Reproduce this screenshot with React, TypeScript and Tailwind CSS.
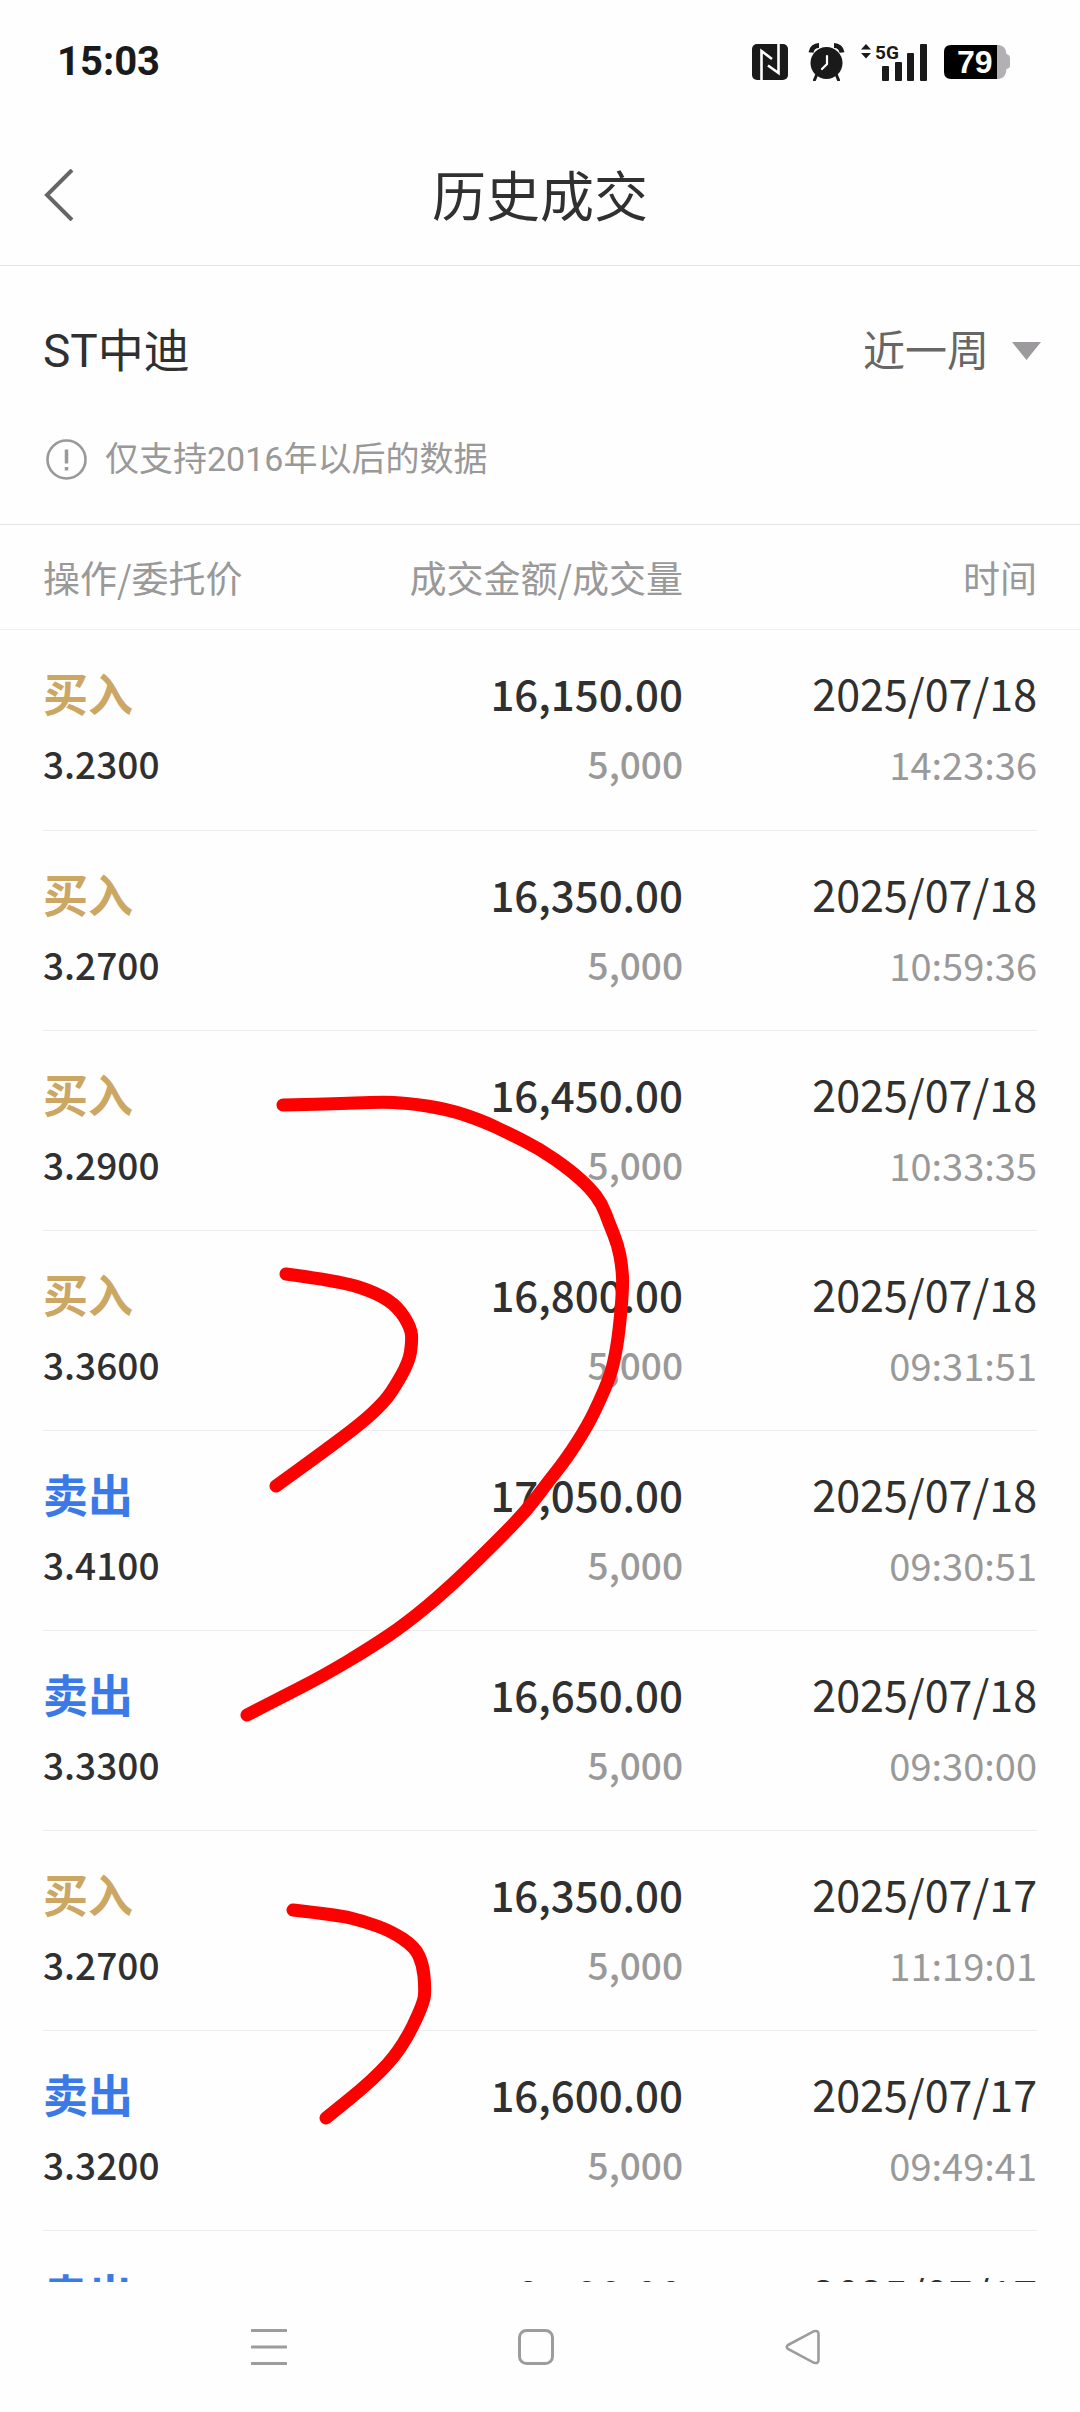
import { useState } from "react"

type Trade = {
   side: 'buy' | 'sell'
   price: string
   amount: string
   volume: string
   date: string
   time: string
}

const trades: Trade[] = [
   { side: 'buy', price: '3.2300', amount: '16,150.00', volume: '5,000', date: '2025/07/18', time: '14:23:36' },
   { side: 'buy', price: '3.2700', amount: '16,350.00', volume: '5,000', date: '2025/07/18', time: '10:59:36' },
   { side: 'buy', price: '3.2900', amount: '16,450.00', volume: '5,000', date: '2025/07/18', time: '10:33:35' },
   { side: 'buy', price: '3.3600', amount: '16,800.00', volume: '5,000', date: '2025/07/18', time: '09:31:51' },
   { side: 'sell', price: '3.4100', amount: '17,050.00', volume: '5,000', date: '2025/07/18', time: '09:30:51' },
   { side: 'sell', price: '3.3300', amount: '16,650.00', volume: '5,000', date: '2025/07/18', time: '09:30:00' },
   { side: 'buy', price: '3.2700', amount: '16,350.00', volume: '5,000', date: '2025/07/17', time: '11:19:01' },
   { side: 'sell', price: '3.3200', amount: '16,600.00', volume: '5,000', date: '2025/07/17', time: '09:49:41' },
   { side: 'sell', price: '3.3400', amount: '16,700.00', volume: '5,000', date: '2025/07/17', time: '09:36:12' },
]

// pen strokes linking a buy with its matching sell
const strokes: number[][][] = [
   [[283, 1105], [330, 1104], [380, 1102], [407, 1103], [447, 1109], [483, 1121], [510, 1134], [540, 1149], [570, 1170],
    [590, 1188], [602, 1204], [609, 1223], [618, 1245], [622, 1267], [623, 1287], [619, 1333], [614, 1362], [609, 1379],
    [600, 1400], [588, 1425], [567, 1458], [548, 1482], [527, 1510], [500, 1538], [450, 1587], [407, 1623], [370, 1648],
    [323, 1676], [280, 1698], [247, 1715]],
   [[286, 1274], [340, 1281], [377, 1293], [398, 1307], [411, 1328], [412, 1342], [409, 1362], [393, 1390], [383, 1403],
    [363, 1422], [323, 1452], [276, 1486]],
   [[293, 1910], [338, 1915], [363, 1921], [391, 1931], [415, 1947], [423, 1965], [425, 1987], [424, 2003], [402, 2048],
    [373, 2080], [326, 2118]],
]

const toPath = (points: number[][]) => {
   let d = `M${points[0][0]} ${points[0][1]}`
   for (let i = 1; i < points.length - 1; i++) {
      const [x, y] = points[i]
      const [nx, ny] = points[i + 1]
      d += ` Q${x} ${y} ${(x + nx) / 2} ${(y + ny) / 2}`
   }
   const last = points[points.length - 1]
   return `${d} L${last[0]} ${last[1]}`
}

const StatusBar = () => (
   <div className="h-[124px] shrink-0 flex items-center justify-between pl-[57px] pr-[70px] text-[#1a1a1a]">
      <span className="text-[40px] font-bold">15:03</span>
      <div className="flex items-center">
         <svg className="mr-5" width="36" height="36" viewBox="0 0 36 36">
            <rect width="36" height="36" rx="5" fill="#1a1a1a" />
            <path d="M9.500 36V7L20 15M26.500 0V29L16 21.500" fill="none" stroke="#fff" strokeWidth="2.600" />
         </svg>
         <svg className="mr-4" width="37" height="38" viewBox="0 0 37 38">
            <path d="M3 9.500A8 8 0 0 1 11 2.500M34 9.500A8 8 0 0 0 26 2.500" fill="none" stroke="#1a1a1a" strokeWidth="5" />
            <path d="M9 31L6.500 37M28 31L30.500 37" stroke="#1a1a1a" strokeWidth="3" strokeLinecap="round" />
            <circle cx="18.500" cy="20" r="16" fill="#1a1a1a" />
            <path d="M19 13V21L14 26" fill="none" stroke="#fff" strokeWidth="2.200" strokeLinecap="round" />
         </svg>
         <svg className="mr-4 overflow-visible" width="67" height="38" viewBox="0 0 67 38">
            <path d="M5 1L10 6.500H0ZM5 15.500L10 10H0Z" fill="#1a1a1a" />
            <text x="14" y="16" fontSize="19" fontWeight="700" fill="#1a1a1a">5G</text>
            <rect x="21" y="23" width="7" height="15" rx="1" fill="#1a1a1a" />
            <rect x="34" y="19" width="7" height="19" rx="1" fill="#1a1a1a" />
            <rect x="46" y="10" width="7" height="28" rx="1" fill="#1a1a1a" />
            <rect x="59" y="1" width="7" height="37" rx="1" fill="#1a1a1a" />
         </svg>
         <svg className="overflow-visible font-['Liberation_Sans',sans-serif]" width="66" height="34" viewBox="0 0 66 34">
            <path d="M53 0H55Q62 1 62.500 9Q66 10 66 13V21Q66 23 62.500 24Q62 33 55 34H53Z" fill="#b3b0b4" />
            <path d="M7 0H53V34H7Q0 34 0 27V7Q0 0 7 0Z" fill="#000" />
            <text x="13" y="28" fontSize="32" fontWeight="700" fill="#fff">79</text>
         </svg>
      </div>
   </div>
)

const TradeRow = ({ trade }: { trade: Trade }) => (
   <tr className="h-[200px] border-b border-[#ececec] align-top leading-[71px] text-[#999]">
      <td className="pt-[27px]">
         {trade.side === 'buy'
            ? <p className="text-[45px] font-bold text-[#cca663]">买入</p>
            : <p className="text-[45px] font-bold text-[#3b7ae6]">卖出</p>}
         <p className="text-[37px] font-medium text-[#303030]">{trade.price}</p>
      </td>
      <td className="pt-[27px] text-right font-medium">
         <p className="text-[42px] text-[#303030]">{trade.amount}</p>
         <p className="text-[37px]">{trade.volume}</p>
      </td>
      <td className="pt-[27px] text-right">
         <p className="text-[43px] text-[#303030]">{trade.date}</p>
         <p className="text-[38px]">{trade.time}</p>
      </td>
   </tr>
)

const App = () => {

   const [range, setRange] = useState<string>('week')

   return (
      <div className="relative h-screen flex flex-col overflow-hidden bg-[#fefefe] font-['Roboto','Noto_Sans_CJK_SC',sans-serif]">
         <StatusBar />
         <header className="relative h-[142px] shrink-0 flex items-center justify-center border-b border-[#e4e4e4]">
            <button aria-label="返回" className="absolute left-[43px]">
               <svg width="32" height="52" viewBox="0 0 32 52">
                  <path d="M29 1L4 26L29 51" fill="none" stroke="#666" strokeWidth="4" />
               </svg>
            </button>
            <h1 className="pt-2 text-[54px] text-[#303030]">历史成交</h1>
         </header>

         <section className="shrink-0 pt-[31px] pb-[11px] border-b border-[#e4e4e4]">
            <div className="h-[108px] flex items-center justify-between pl-[43px] pr-[39px]">
               <h2 className="text-[46px] text-[#303030]">ST中迪</h2>
               <label className="flex items-center gap-[22px]">
                  <select
                     aria-label="时间范围"
                     value={range}
                     onChange={e => setRange(e.target.value)}
                     className="appearance-none bg-transparent text-[42px] text-[#666]"
                  >
                     <option value="week">近一周</option>
                     <option value="month">近一月</option>
                     <option value="quarter">近三月</option>
                  </select>
                  <svg width="29" height="18" viewBox="0 0 29 18">
                     <path d="M0 0H29L14.500 18Z" fill="#9c9a9c" />
                  </svg>
               </label>
            </div>
            <div className="h-[108px] flex items-center gap-[18px] px-[46px] text-[34px] text-[#999]">
               <svg width="41" height="41" viewBox="0 0 41 41">
                  <circle cx="20.500" cy="20.500" r="19" fill="none" stroke="#999" strokeWidth="2.600" />
                  <path d="M20.500 10.500V24.500M20.500 28V31.500" stroke="#999" strokeWidth="3.500" />
               </svg>
               <p>仅支持2016年以后的数据</p>
            </div>
         </section>

         <main className="flex-1 min-h-0 overflow-hidden px-[43px] font-['Noto_Sans_CJK_SC',sans-serif]">
            <table className="w-full table-fixed border-collapse">
               <thead>
                  <tr className="relative h-[105px] text-[37px] text-[#999]">
                     <th className="text-left font-normal after:absolute after:-inset-x-[43px] after:bottom-0 after:h-px after:bg-[#f0f0f0]">操作/委托价</th>
                     <th className="text-right font-normal">成交金额/成交量</th>
                     <th className="w-[354px] text-right font-normal">时间</th>
                  </tr>
               </thead>
               <tbody>
                  {trades.map((trade, i) => <TradeRow key={i} trade={trade} />)}
               </tbody>
            </table>
         </main>

         <nav className="h-[130px] shrink-0 flex items-center justify-between pl-[251px] pr-[259px]">
            <button aria-label="菜单">
               <svg width="36" height="36" viewBox="0 0 36 36">
                  <path d="M1 1.500H35M1 18H35M1 34.500H35" stroke="#9c9c9c" strokeWidth="3" strokeLinecap="round" />
               </svg>
            </button>
            <button aria-label="主页">
               <svg width="36" height="36" viewBox="0 0 36 36">
                  <rect x="1.500" y="1.500" width="33" height="33" rx="7" fill="none" stroke="#9c9c9c" strokeWidth="3" />
               </svg>
            </button>
            <button aria-label="后退">
               <svg width="36" height="36" viewBox="0 0 36 36">
                  <path d="M3 16L29 2.200Q33.500 1 33.500 5V31Q33.500 35 29 33.800L3 20Q0.500 18 3 16Z" fill="none" stroke="#9c9c9c" strokeWidth="2.600" />
               </svg>
            </button>
         </nav>

         <svg className="pointer-events-none absolute left-0 top-0 w-full" viewBox="0 0 1080 2412">
            {strokes.map((points, i) => (
               <path key={i} d={toPath(points)} fill="none" stroke="#ff0000" strokeWidth="13" strokeLinecap="round" strokeLinejoin="round" />
            ))}
         </svg>
      </div>
   )
}

export default App
